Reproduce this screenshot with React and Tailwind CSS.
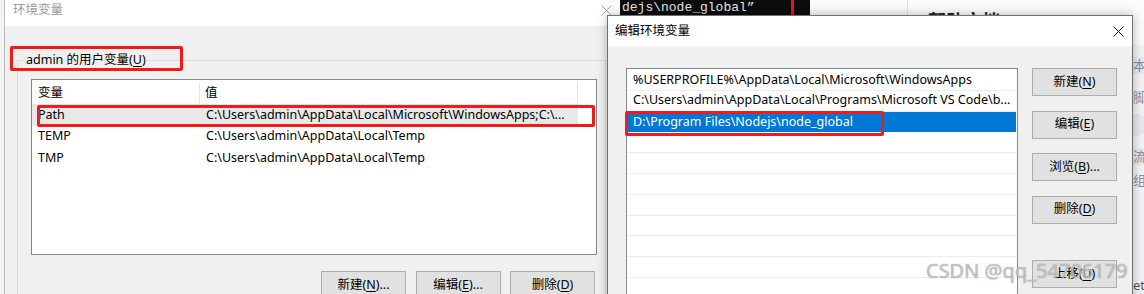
import React from "react";

const U = ({ children }) => <span className="underline underline-offset-2">{children}</span>;

function WinBtn({ children, className = "" }) {
  return (
    <div
      className={
        "flex h-[28px] w-[85px] shrink-0 items-center justify-center border border-[#adadad] bg-[#e1e1e1] text-[12.5px] text-black " +
        className
      }
    >
      {children}
    </div>
  );
}

function CloseX({ color, size = 11, w = 1 }) {
  return (
    <svg width={size} height={size} viewBox="0 0 11 11">
      <path d="M0.5 0.5 L10.5 10.5 M10.5 0.5 L0.5 10.5" stroke={color} strokeWidth={w} fill="none" />
    </svg>
  );
}

function RedBox({ className }) {
  return <div className={"pointer-events-none absolute rounded-[2px] border-[3px] border-[#f21b1b] " + className} />;
}

export default function App() {
  const rightRows = [
    "%USERPROFILE%\\AppData\\Local\\Microsoft\\WindowsApps",
    "C:\\Users\\admin\\AppData\\Local\\Programs\\Microsoft VS Code\\b...",
    "D:\\Program Files\\Nodejs\\node_global",
    "",
    "",
    "",
    "",
    "",
    "",
    "",
    "",
  ];
  return (
    <div className="relative h-[294px] w-[1144px] overflow-hidden bg-[#f3f3f3] font-['Noto_Sans','Noto_Sans_CJK_SC',sans-serif] text-[12.5px] text-black">
      {/* Left window: 环境变量 */}
      <div className="absolute left-[4px] top-0 flex h-[294px] w-[616px] flex-col overflow-hidden border-l border-[#bdbdbd]">
        <div className="flex h-[26px] shrink-0 items-start justify-between bg-white pl-[8px] pr-[8px] pt-[2px]">
          <span className="leading-[16px] text-[#9a9a9a]">环境变量</span>
          <div className="pt-[3px]">
            <CloseX color="#a0a0a0" size={11} />
          </div>
        </div>
        <div className="flex-1 bg-[#f0f0f0] pl-[12px] pt-[24px]">
          <fieldset className="h-[300px] w-[589px] border border-[#dcdcdc]">
            <legend className="ml-[7px] px-[1px] leading-[20px]">
              admin 的用户变量(<U>U</U>)
            </legend>
            <div className="ml-[13px] mt-[9px] h-[176px] w-[566px] border border-[#828790] bg-white">
              <div className="flex h-[24px] items-center pt-[2px]">
                <div className="flex h-full w-[168px] items-center border-r border-[#e5e5e5] pl-[6px]">变量</div>
                <div className="flex h-full w-[378px] items-center border-r border-[#e5e5e5] pl-[5px]">值</div>
              </div>
              <div className="flex h-[21.5px] w-[546px] items-center bg-[#e8e8e8] pt-[1px]">
                <div className="w-[168px] pl-[6px]">Path</div>
                <div className="pl-[6px]">C:\Users\admin\AppData\Local\Microsoft\WindowsApps;C:\...</div>
              </div>
              <div className="flex h-[21.5px] w-[546px] items-center pt-[1px]">
                <div className="w-[168px] pl-[6px]">TEMP</div>
                <div className="pl-[6px]">C:\Users\admin\AppData\Local\Temp</div>
              </div>
              <div className="flex h-[21.5px] w-[546px] items-center pt-[1px]">
                <div className="w-[168px] pl-[6px]">TMP</div>
                <div className="pl-[6px]">C:\Users\admin\AppData\Local\Temp</div>
              </div>
            </div>
            <div className="ml-[303px] mt-[16px] flex gap-[9.5px]">
              <WinBtn>新建(<U>N</U>)...</WinBtn>
              <WinBtn>编辑(<U>E</U>)...</WinBtn>
              <WinBtn>删除(<U>D</U>)</WinBtn>
            </div>
          </fieldset>
        </div>
      </div>

      {/* Terminal behind */}
      <div className="absolute left-[620px] top-0 h-[40px] w-[190px] overflow-hidden bg-[#0c0c0c]">
        <div className="pl-[2px] font-['Liberation_Mono',monospace] text-[13px] leading-[16px] text-[#e6e6e6]">
          dejs\node_global”
        </div>
        <div className="absolute left-[171px] top-0 h-[40px] w-[3px] bg-[#e81123]" />
      </div>

      {/* Background page on the right */}
      <div className="absolute left-[810px] top-0 flex h-[294px] w-[334px]">
        <div className="h-full w-[97px] bg-[#fafafa]" />
        <div className="relative h-full flex-1 border-l border-[#e3e3e3] bg-[#fbfbfb]">
          <div className="absolute left-[20px] top-[9px] text-[18px] font-bold leading-[24px] text-[#222]">帮助文档</div>
          <div className="absolute left-[222px] top-[45px] flex h-[249px] w-[30px] flex-col overflow-hidden whitespace-nowrap bg-[#f2f3f7] text-[13px] text-[#8a8fa3]">
            <div className="mt-[12px] flex h-[17px] items-center bg-[#e6e8ef] pl-[3px]">本地</div>
            <div className="mt-[15px] flex h-[17px] items-center pl-[3px]">脚本</div>
            <div className="ml-[-6px] mt-[8px] h-[24px] w-[24px] rounded-full bg-[#e6e8ee]" />
            <div className="mt-[12px] flex h-[17px] items-center bg-[#e6e8ef] pl-[3px]">流程</div>
            <div className="mt-[7px] flex h-[17px] items-center pl-[3px]">组图</div>
            <div className="mt-[88px] flex h-[17px] items-center pl-[3px] text-[#555]">et</div>
          </div>
        </div>
      </div>

      {/* Right dialog: 编辑环境变量 */}
      <div className="absolute left-[607px] top-[15px] flex h-[300px] w-[526px] flex-col border border-[#707070] bg-[#f0f0f0] shadow-[0_0_10px_rgba(0,0,0,0.28)]">
        <div className="flex h-[30px] shrink-0 items-center justify-between bg-white pl-[7px] pr-[8px]">
          <span>编辑环境变量</span>
          <CloseX color="#111" size={11} />
        </div>
        <div className="flex pl-[18px] pt-[22px]">
          <div className="h-[240px] w-[392px] border border-[#828790] bg-white pt-[1px]">
            {rightRows.map((t, i) => (
              <div key={i} className="h-[20.8px] px-[1px]">
                <div
                  className={
                    "flex h-full items-center pl-[5px] " +
                    (i === 2 ? "bg-[#0078d7] text-white" : "border-b border-[#ededed]")
                  }
                >
                  {t}
                </div>
              </div>
            ))}
          </div>
          <div className="ml-[14px] flex flex-col">
            <WinBtn>新建(<U>N</U>)</WinBtn>
            <WinBtn className="mt-[14.5px]">编辑(<U>E</U>)</WinBtn>
            <WinBtn className="mt-[14.5px]">浏览(<U>B</U>)...</WinBtn>
            <WinBtn className="mt-[14.5px]">删除(<U>D</U>)</WinBtn>
            <WinBtn className="mt-[36.5px]">上移(<U>U</U>)</WinBtn>
          </div>
        </div>
      </div>

      {/* Annotations */}
      <RedBox className="left-[10px] top-[46px] h-[25px] w-[173px]" />
      <RedBox className="left-[37px] top-[105px] h-[22px] w-[558px]" />
      <RedBox className="left-[625px] top-[111px] h-[25px] w-[259px]" />

      {/* Watermark */}
      <div className="pointer-events-none absolute left-[926px] top-[258px] whitespace-nowrap font-['Noto_Sans',sans-serif] text-[20px] leading-[26px] text-[rgba(255,255,255,0.55)] [text-shadow:0_0_1px_rgba(90,90,90,0.9)]">
        CSDN @qq_54706179
      </div>
    </div>
  );
}
